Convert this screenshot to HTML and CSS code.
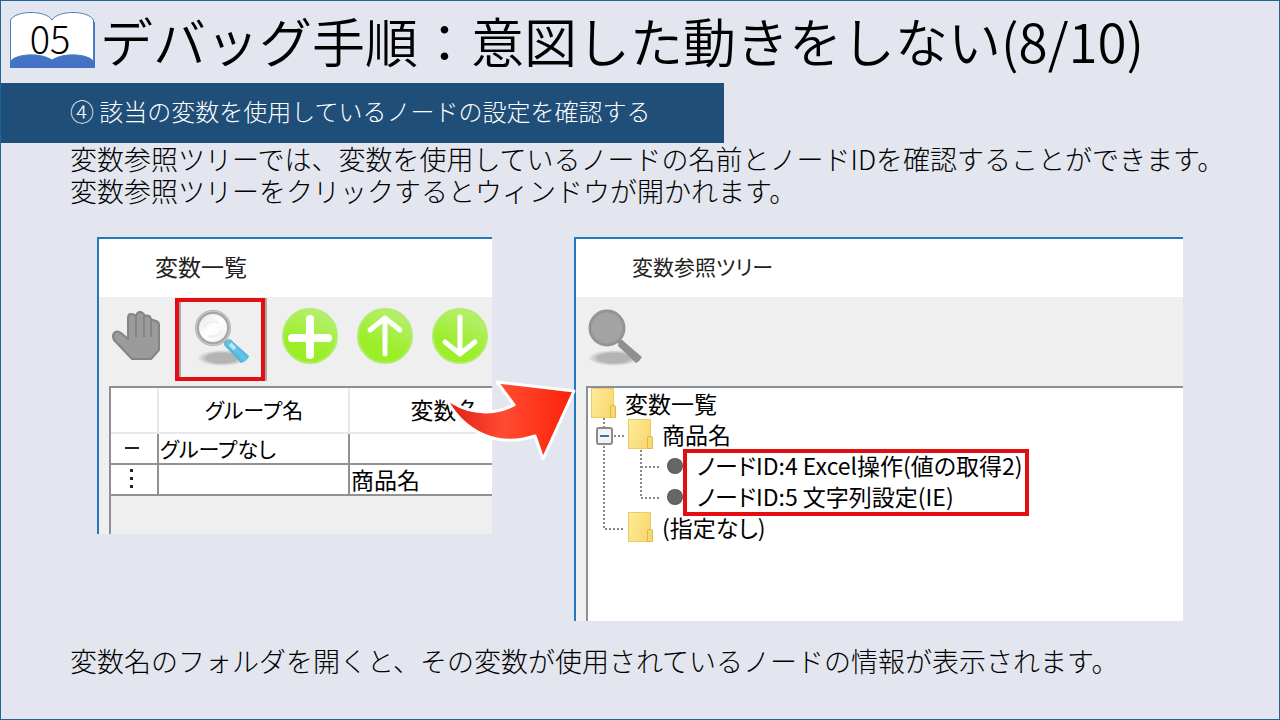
FILE: index.html
```
<!DOCTYPE html>
<html lang="ja">
<head>
    <meta charset="UTF-8">
    <title>デバッグ手順：意図した動きをしない(8/10)</title>
    <link rel="stylesheet" href="styles.css">
</head>
<body>
    <main class="slide">
        <header class="slide-header">
            <div class="chapter">
                <svg viewBox="0 0 86 57" aria-hidden="true">
                    <path d="M4 10H85V56H0V40Z" fill="#4472c4"/>
                    <path d="M0.500 8C6-2 36-2 42 8C48-2 78-2 83.500 8V49C76 41 52 41 42 48C32 41 8 41 0.500 49Z" fill="#fff" stroke="#4b7fc0"/>
                </svg>
                <span>05</span>
            </div>
            <h1>デバッグ手順：意図した動きをしない(8/10)</h1>
        </header>

        <h2>④ 該当の変数を使用しているノードの設定を確認する</h2>

        <div class="lead">
            <p>変数参照ツリーでは、変数を使用しているノードの名前とノードIDを確認することができます。</p>
            <p>変数参照ツリーをクリックするとウィンドウが開かれます。</p>
        </div>

        <div class="screens">
            <section class="window list-window">
                <h3>変数一覧</h3>
                <div class="toolbar">
                    <button type="button" class="hand" aria-label="移動">
                        <svg width="48" height="52" viewBox="0 0 48 52">
                            <path d="M16 28V7Q16 3 19 3Q22 3 24 5Q25 1 28 1Q31 1 33 5Q35 4 37 5Q39 6 39 9Q41 8 44 10Q47 11 47 14V39L39 48H20L2 29Q0 25 2 22Q5 19 9 22Z" fill="#9b9b9b" stroke="#848484" stroke-width="2" stroke-linejoin="round"/>
                            <path d="M24 5V26M32 5V26M39 9V26" fill="none" stroke="#858585" stroke-width="2"/>
                        </svg>
                    </button>
                    <button type="button" class="search highlight" aria-label="変数参照ツリー">
                        <svg width="58" height="58" viewBox="0 0 58 58">
                            <defs>
                                <radialGradient id="shade"><stop offset="0.600" stop-color="#b4b4b4"/><stop offset="1" stop-color="#b4b4b4" stop-opacity="0"/></radialGradient>
                                <linearGradient id="glass" x1="0" y1="0" x2="1" y2="1"><stop stop-color="#e4e4e4"/><stop offset="0.500" stop-color="#fff"/><stop offset="1" stop-color="#ececec"/></linearGradient>
                                <linearGradient id="handle" x1="0" y1="1" x2="1" y2="0"><stop stop-color="#197fae"/><stop offset="0.500" stop-color="#65c5e9"/><stop offset="1" stop-color="#1e88b8"/></linearGradient>
                            </defs>
                            <ellipse cx="29" cy="49" rx="25" ry="8" fill="url(#shade)"/>
                            <path d="M31 31L38 37" stroke="#aaa" stroke-width="5"/>
                            <circle cx="20" cy="19" r="16" fill="url(#glass)" stroke="#a7a7a7" stroke-width="4"/>
                            <circle cx="20" cy="19" r="17" fill="none" stroke="#d5d5d5"/>
                            <path d="M11 18Q17 10 26 14M15 27Q24 29 29 22" fill="none" stroke="#eee" stroke-width="2"/>
                            <path d="M37 30L56 47Q55 52 48 54L31 36Q32 31 37 30Z" fill="url(#handle)"/>
                            <path d="M37 35L42 40" stroke="#b7e7f7" stroke-width="4"/>
                        </svg>
                    </button>
                    <button type="button" class="round" aria-label="追加">
                        <svg width="56" height="56" viewBox="0 0 56 56">
                            <defs><linearGradient id="green" x1="0.700" y1="0" x2="0.400" y2="0.700"><stop stop-color="#b8ef72"/><stop offset="1" stop-color="#9bee28"/></linearGradient></defs>
                            <circle cx="28" cy="28" r="27" fill="url(#green)" stroke="#b0ed6a" stroke-width="2"/>
                            <path d="M28 11V47M10 30H46" stroke="#fff" stroke-width="8" stroke-linecap="round"/>
                        </svg>
                    </button>
                    <button type="button" class="round" aria-label="上へ">
                        <svg width="56" height="56" viewBox="0 0 56 56">
                            <circle cx="28" cy="28" r="27" fill="url(#green)" stroke="#b0ed6a" stroke-width="2"/>
                            <path d="M28 46V10M13 22L28 10L43 22" fill="none" stroke="#fff" stroke-width="5" stroke-linecap="round" stroke-linejoin="round"/>
                        </svg>
                    </button>
                    <button type="button" class="round" aria-label="下へ">
                        <svg width="56" height="56" viewBox="0 0 56 56">
                            <circle cx="28" cy="28" r="27" fill="url(#green)" stroke="#b0ed6a" stroke-width="2"/>
                            <path d="M28 9V46M13 34L28 46L43 34" fill="none" stroke="#fff" stroke-width="5" stroke-linecap="round" stroke-linejoin="round"/>
                        </svg>
                    </button>
                </div>
                <div class="pane table-pane">
                    <table>
                        <thead>
                            <tr><th></th><th class="kana">グループ名</th><th>変数名</th></tr>
                        </thead>
                        <tbody>
                            <tr><td class="mark"><i class="minus"></i></td><td class="kana">グループなし</td><td></td></tr>
                            <tr><td class="mark"><i class="dots"></i></td><td></td><td>商品名</td></tr>
                        </tbody>
                    </table>
                </div>
            </section>

            <section class="window tree-window">
                <h3 class="kana">変数参照ツリー</h3>
                <div class="toolbar">
                    <button type="button" class="search" aria-label="検索">
                        <svg width="58" height="58" viewBox="0 0 58 58">
                            <ellipse cx="28" cy="50" rx="26" ry="8" fill="url(#shade)"/>
                            <path d="M31 31L38 37" stroke="#999" stroke-width="5"/>
                            <circle cx="21" cy="20" r="17" fill="#a3a3a3" stroke="#949494" stroke-width="3"/>
                            <path d="M36 32L56 49Q54 53 50 55L32 38Q32 34 36 32Z" fill="#8f8f8f"/>
                        </svg>
                    </button>
                </div>
                <div class="pane tree">
                    <svg class="lines" width="100" height="160" viewBox="0 0 100 160" aria-hidden="true">
                        <g fill="none" stroke="#888" stroke-width="2" stroke-dasharray="2 2">
                            <path d="M16 30V141H37"/>
                            <path d="M26 48H37"/>
                            <path d="M53 62V110H72M53 79H72"/>
                        </g>
                        <rect x="9" y="40" width="15" height="16" rx="2" fill="#f3f3f3" stroke="#8b8b8b" stroke-width="2"/>
                        <path d="M12 48H21" stroke="#4668ad" stroke-width="2"/>
                    </svg>
                    <ul>
                        <li><span class="folder"></span>変数一覧
                            <ul>
                                <li><span class="folder"></span>商品名
                                    <ul class="nodes">
                                        <li><span class="bullet"></span>ノードID:4 Excel操作(値の取得2)</li>
                                        <li><span class="bullet"></span>ノードID:5 文字列設定(IE)</li>
                                    </ul>
                                </li>
                                <li><span class="folder"></span>(指定なし)</li>
                            </ul>
                        </li>
                    </ul>
                </div>
            </section>

            <svg class="arrow" width="132" height="84" viewBox="0 0 132 84" aria-hidden="true">
                <defs><linearGradient id="red"><stop stop-color="#dd1c12"/><stop offset="0.450" stop-color="#ff4b32"/><stop offset="1" stop-color="#fb2107"/></linearGradient></defs>
                <path d="M1 18C18 32 43 39 70 26L53 3L130 12L99 80L91 57C55 69 20 55 1 18Z" fill="url(#red)" stroke="#fff" stroke-width="3" stroke-linejoin="round"/>
            </svg>
        </div>

        <p class="note">変数名のフォルダを開くと、その変数が使用されているノードの情報が表示されます。</p>
    </main>
</body>
</html>
```
FILE: styles.css
```
*, *::before, *::after {
    box-sizing: border-box;
}
body {
    margin: 0;
    color: #000;
    font-family: "Noto Sans CJK JP", sans-serif;
}
h1, h2, h3, p, ul {
    margin: 0;
    padding: 0;
}
.slide {
    display: flex;
    flex-direction: column;
    min-height: 100vh;
    background-color: #e3e6ee;
    border: 1px solid #1f659c;
}
.slide-header {
    display: flex;
    align-items: center;
    height: 82px;
    padding: 0 0 4px 9px;
    gap: 4px;
}
.chapter {
    position: relative;
    width: 86px;
    height: 57px;
    font-size: 38px;
    font-weight: 300;
    line-height: 52px;
    text-align: center;
}
.chapter svg {
    position: absolute;
    inset: 0;
}
.chapter span {
    position: relative;
    padding-right: 6px;
}
h1 {
    font-size: 53px;
    font-weight: 350;
    line-height: 76px;
    white-space: nowrap;
}
h2 {
    width: 723px;
    max-width: 100%;
    padding: 0 0 4px 69px;
    background-color: #1f4e79;
    color: #fff;
    font-size: 24px;
    font-weight: 300;
    line-height: 56px;
}
.lead, .note {
    padding-left: 69px;
    font-size: 27px;
    font-weight: 300;
    line-height: 32px;
}
.screens {
    position: relative;
    display: grid;
    grid-template-columns: 395fr 609fr;
    align-items: start;
    gap: 82px;
    margin: 30px 96px 24px;
}
.window {
    overflow: hidden;
    background-color: #efefef;
    border-top: 2px solid #2478bd;
    border-left: 2px solid #2478bd;
    font-size: 23px;
    font-feature-settings: "palt";
}
h3 {
    height: 58px;
    padding-left: 56px;
    background-color: #fff;
    font-size: 23px;
    font-weight: 400;
    line-height: 54px;
    color: #222;
}
.kana {
    font-size: 21px;
}
.toolbar {
    display: flex;
    height: 89px;
    padding: 1px 0 0 10px;
}
.toolbar button {
    flex: none;
    padding: 0;
    background: none;
    border: none;
}
.toolbar svg {
    display: block;
}
.toolbar .hand {
    width: 66px;
    height: 78px;
    padding: 0 0 0 3px;
}
.toolbar .search {
    width: 60px;
    height: 78px;
}
.toolbar .search.highlight {
    width: 90px;
    height: 83px;
    padding: 0 0 4px 14px;
    margin-right: 17px;
    border: 4px solid #e60d12;
    box-shadow: inset 2px 0 #aaa, 2px 0 #aaa;
}
.toolbar .round {
    width: 75px;
    height: 75px;
}
.pane {
    margin-left: 10px;
    border-top: 2px solid #8b9097;
    border-left: 2px solid #8b9097;
}
.table-pane {
    height: 148px;
}
table {
    width: 430px;
    table-layout: fixed;
    border-collapse: collapse;
    background-color: #fff;
}
th, td {
    height: 31px;
    padding: 0 0 2px 1px;
    border-right: 2px solid #919191;
    border-bottom: 2px solid #919191;
    font-weight: 400;
    line-height: 26px;
    text-align: left;
}
th {
    height: 45px;
    border-color: #e8e8e8;
    text-align: center;
}
th:first-child {
    width: 47px;
}
th:nth-child(2) {
    width: 191px;
}
.mark {
    padding-right: 6px;
}
.mark i {
    display: block;
    margin: 0 auto;
    background-color: #222;
}
.minus {
    width: 14px;
    height: 2px;
}
.mark .dots {
    width: 3px;
    height: 19px;
    background: repeating-linear-gradient(#222 0 3px, transparent 3px 8px);
}
.tree {
    position: relative;
    height: 235px;
    background-color: #fff;
    line-height: 31px;
}
.lines {
    position: absolute;
    top: 0;
    left: 0;
}
.tree ul {
    list-style: none;
}
.tree > ul {
    padding-left: 3px;
}
.tree ul ul {
    padding-left: 37px;
}
.folder {
    position: relative;
    display: inline-block;
    width: 23px;
    height: 30px;
    margin-right: 11px;
    vertical-align: top;
    background: linear-gradient(110deg, #ffeb9c, #f8d568);
    border: 1px solid #eccb65;
}
.folder::after {
    content: "";
    position: absolute;
    right: -3px;
    bottom: -1px;
    width: 6px;
    height: 13px;
    background-color: #f8da70;
    border: 1px solid #dcb94f;
    border-radius: 2px 2px 0 0;
}
.nodes {
    position: relative;
}
.nodes::after {
    content: "";
    position: absolute;
    top: -1px;
    left: 55px;
    width: 346px;
    height: 67px;
    border: 4px solid #e60d12;
}
.bullet {
    display: inline-block;
    width: 16px;
    height: 16px;
    margin: 8px 14px 0 2px;
    vertical-align: top;
    background-color: #666;
    border: 1px dotted #444;
    border-radius: 50%;
}
.arrow {
    position: absolute;
    top: 142px;
    left: calc((100% - 82px) * 395 / 1004 - 48px);
}
.note {
    margin-bottom: 20px;
}
```
